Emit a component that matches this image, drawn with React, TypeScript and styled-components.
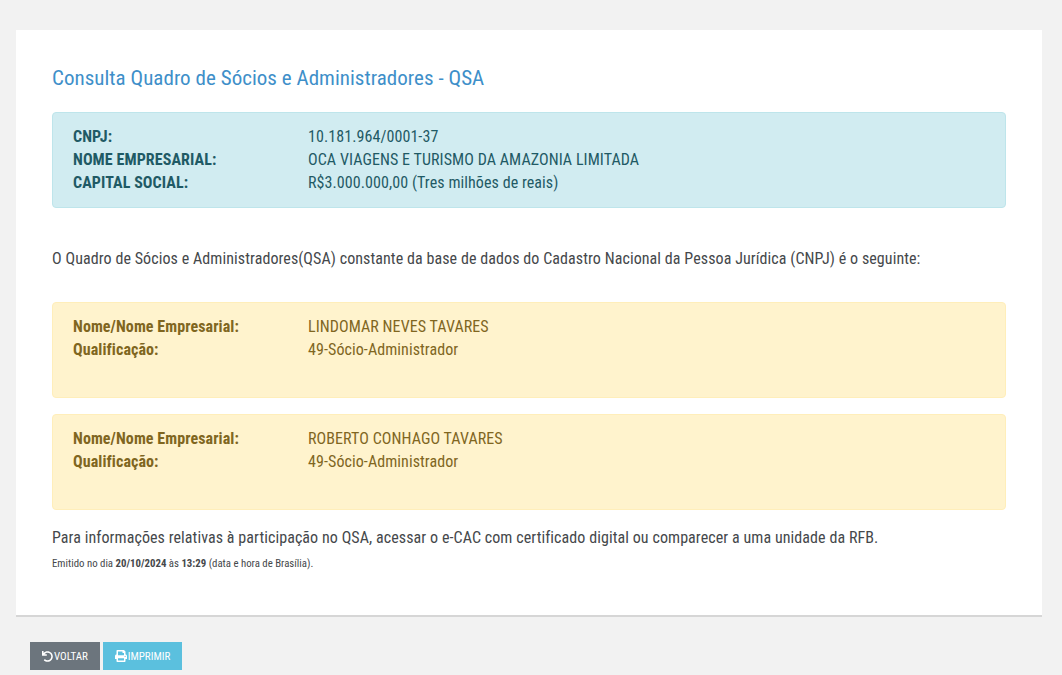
import React from "react";
import styled, { createGlobalStyle } from "styled-components";
import { FaUndo, FaPrint } from "react-icons/fa";

const Global = createGlobalStyle`
  html, body { margin: 0; padding: 0; background: #f2f2f2; }
  body { font-family: Roboto, "Liberation Sans", sans-serif; font-stretch: 75%; color: #45484b; letter-spacing: .08px; }
`;
const Page = styled.div`
  width: 1062px;
  height: 675px;
  padding: 30px 20px 0 16px;
  box-sizing: border-box;
  overflow: hidden;
`;
const Card = styled.main`
  background: #fff;
  height: 587px;
  box-sizing: border-box;
  padding: 36px 36px 0;
  border-bottom: 2px solid #d6d6d6;
`;
const Title = styled.h1`
  margin: 0 0 21px;
  font-size: 21px;
  line-height: 25px;
  font-weight: 400;
  letter-spacing: .03px;
  color: #3e8fc9;
`;
const Alert = styled.section<{ $tone: "info" | "warning" }>`
  box-sizing: border-box;
  height: 96px;
  padding: 12px 20px 0;
  border-radius: 4px;
  border: 1px solid ${(p) => (p.$tone === "info" ? "#bee5eb" : "#ffeeba")};
  background: ${(p) => (p.$tone === "info" ? "#d1ecf1" : "#fff3cd")};
  color: ${(p) => (p.$tone === "info" ? "#1f5a65" : "#80661f")};
  margin-bottom: 16px;
  font-size: 16px;
  line-height: 23px;
`;
const Row = styled.div`
  display: grid;
  grid-template-columns: 235px 1fr;
`;
const Label = styled.span`
  font-weight: 700;
`;
const Intro = styled.p`
  margin: 39px 0 31px;
  font-size: 16px;
  line-height: 24px;
`;
const Note = styled.p`
  margin: 0;
  font-size: 16px;
  line-height: 24px;
`;
const Small = styled.p`
  margin: 6px 0 0;
  font-size: 10.8px;
  line-height: 16px;
  letter-spacing: 0;
`;
const Actions = styled.div`
  display: flex;
  gap: 3px;
  margin: 25px 0 0 14px;
`;
const Button = styled.button<{ $tone: "gray" | "blue"; $w: number }>`
  display: flex;
  align-items: center;
  justify-content: center;
  gap: 1px;
  width: ${(p) => p.$w}px;
  height: 28px;
  padding: 0;
  border: 0;
  color: #fff;
  font: 400 11px Roboto, sans-serif;
  font-stretch: 75%;
  background: ${(p) => (p.$tone === "gray" ? "#6c757d" : "#5bc0de")};
`;

const partners = ["LINDOMAR NEVES TAVARES", "ROBERTO CONHAGO TAVARES"];

export default function App() {
  return (
    <Page>
      <Global />
      <Card>
        <Title>Consulta Quadro de Sócios e Administradores - QSA</Title>
        <Alert $tone="info">
          <Row><Label>CNPJ:</Label><span>10.181.964/0001-37</span></Row>
          <Row><Label>NOME EMPRESARIAL:</Label><span>OCA VIAGENS E TURISMO DA AMAZONIA LIMITADA</span></Row>
          <Row><Label>CAPITAL SOCIAL:</Label><span>R$3.000.000,00 (Tres milhões de reais)</span></Row>
        </Alert>
        <Intro>O Quadro de Sócios e Administradores(QSA) constante da base de dados do Cadastro Nacional da Pessoa Jurídica (CNPJ) é o seguinte:</Intro>
        {partners.map((name) => (
          <Alert $tone="warning" key={name}>
            <Row><Label>Nome/Nome Empresarial:</Label><span>{name}</span></Row>
            <Row><Label>Qualificação:</Label><span>49-Sócio-Administrador</span></Row>
          </Alert>
        ))}
        <Note>Para informações relativas à participação no QSA, acessar o e-CAC com certificado digital ou comparecer a uma unidade da RFB.</Note>
        <Small>Emitido no dia <b>20/10/2024</b> às <b>13:29</b> (data e hora de Brasília).</Small>
      </Card>
      <Actions>
        <Button $tone="gray" $w={70}><FaUndo size={11} />VOLTAR</Button>
        <Button $tone="blue" $w={79}><FaPrint size={12} />IMPRIMIR</Button>
      </Actions>
    </Page>
  );
}
